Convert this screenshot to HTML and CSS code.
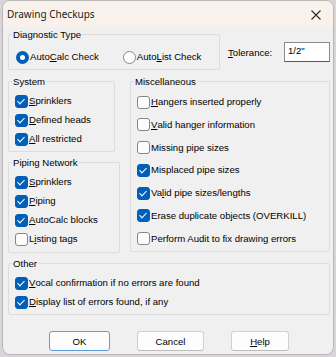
FILE: index.html
```html
<!DOCTYPE html>
<html lang="en">
<head>
    <meta charset="UTF-8">
    <title>Drawing Checkups</title>
    <link rel="stylesheet" href="styles.css">
</head>
<body>

    <div class="window">
        <div class="titlebar">
            <span class="title">Drawing Checkups</span>
            <svg class="close" width="10" height="10" viewBox="0 0 10 10">
                <path d="M0.5 0.5 L9.5 9.5 M9.5 0.5 L0.5 9.5" stroke="#2b2b2b" stroke-width="1.1" fill="none"/>
            </svg>
        </div>

        <div class="content">
            <!-- Diagnostic type + tolerance -->
            <div class="top-row">
                <div class="group diag">
                    <div class="group-title">Diagnostic Type</div>
                    <div class="radios">
                        <label class="opt"><span class="radio on"></span>Auto<u>C</u>alc Check</label>
                        <label class="opt"><span class="radio"></span>Auto<u>L</u>ist Check</label>
                    </div>
                </div>
                <div class="tolerance">
                    <span class="tol-label"><u>T</u>olerance:</span>
                    <div class="tol-input">1/2"</div>
                </div>
            </div>

            <div class="mid-row">
                <div class="left-col">
                    <div class="group system">
                        <div class="group-title">System</div>
                        <div class="items tight">
                            <label class="opt"><span class="check on"></span><u>S</u>prinklers</label>
                            <label class="opt"><span class="check on"></span><u>D</u>efined heads</label>
                            <label class="opt"><span class="check on"></span><u>A</u>ll restricted</label>
                        </div>
                    </div>
                    <div class="group piping">
                        <div class="group-title">Piping Network</div>
                        <div class="items tight">
                            <label class="opt"><span class="check on"></span><u>S</u>prinklers</label>
                            <label class="opt"><span class="check on"></span><u>P</u>iping</label>
                            <label class="opt"><span class="check on"></span><u>A</u>utoCalc blocks</label>
                            <label class="opt"><span class="check"></span>L<u>i</u>sting tags</label>
                        </div>
                    </div>
                </div>

                <div class="group misc">
                    <div class="group-title">Miscellaneous</div>
                    <div class="items wide">
                        <label class="opt"><span class="check"></span><u>H</u>angers inserted properly</label>
                        <label class="opt"><span class="check"></span><u>V</u>alid hanger information</label>
                        <label class="opt"><span class="check"></span>Missing pipe sizes</label>
                        <label class="opt"><span class="check on"></span>Misplaced pipe sizes</label>
                        <label class="opt"><span class="check on"></span>Va<u>l</u>id pipe sizes/lengths</label>
                        <label class="opt"><span class="check on"></span>Erase duplicate objects (OVERKILL)</label>
                        <label class="opt"><span class="check"></span>Perform Audit to fix drawing errors</label>
                    </div>
                </div>
            </div>

            <div class="group other">
                <div class="group-title">Other</div>
                <div class="items tight">
                    <label class="opt"><span class="check on"></span><u>V</u>ocal confirmation if no errors are found</label>
                    <label class="opt"><span class="check on"></span><u>D</u>isplay list of errors found, if any</label>
                </div>
            </div>

            <div class="buttons">
                <button class="btn ok">OK</button>
                <button class="btn cancel">Cancel</button>
                <button class="btn help"><u>H</u>elp</button>
            </div>
        </div>
    </div>

</body>
</html>
```

FILE: styles.css
```css
/* General styles */
body {
    margin: 0;
    padding: 0;
    background: #d9d4d8;
    font-family: "Liberation Sans", Arial, sans-serif;
    font-size: 9.6px;
    color: #000;
}

.window {
    margin-left: 2px;
    width: 332px;
    height: 355px;
    box-sizing: border-box;
    border: 1px solid #b8b8b8;
    border-radius: 8px;
    background: #f0f0f0;
    overflow: hidden;
}

/* Title bar */
.titlebar {
    height: 26px;
    background: #f9f2ec;
    display: flex;
    align-items: center;
    justify-content: space-between;
    padding: 0 12px 0 4px;
}

.title {
    font-family: "Noto Sans", sans-serif;
    font-size: 10px;
    color: #1a1a1a;
}

.close {
    margin-top: 1px;
}

.content {
    padding: 0 3px 0 5px;
}

/* Group boxes */
.group {
    border: 1px solid #dcdcdc;
    border-radius: 2px;
    box-sizing: border-box;
}

.group-title {
    display: table;
    margin: -7px 0 0 3px;
    padding: 0 1px;
    height: 13px;
    line-height: 13px;
    background: #f0f0f0;
}

.opt {
    display: flex;
    align-items: center;
    height: 14px;
    line-height: 14px;
    white-space: nowrap;
}

.items {
    display: flex;
    flex-direction: column;
    padding-left: 6px;
}

.items.tight {
    margin-top: 6px;
    gap: 5px;
}

.items.wide {
    margin-top: 7px;
    gap: 8.8px;
}

/* Checkboxes and radios */
.check {
    width: 13px;
    height: 13px;
    box-sizing: border-box;
    border: 1px solid #868686;
    border-radius: 3px;
    background: #fdfdfd;
    margin-right: 1px;
    flex: none;
    position: relative;
}

.check.on {
    background: #005fb8;
    border-color: #005fb8;
}

.check.on::after {
    content: "";
    position: absolute;
    left: 3px;
    top: 1px;
    width: 3px;
    height: 6px;
    border: solid #fff;
    border-width: 0 1.4px 1.4px 0;
    transform: rotate(45deg);
}

.radio {
    width: 13px;
    height: 13px;
    box-sizing: border-box;
    border: 1px solid #868686;
    border-radius: 50%;
    background: #fdfdfd;
    margin-right: 1px;
    flex: none;
}

.radio.on {
    border: 4px solid #005fb8;
    background: #fff;
}

/* Top row */
.top-row {
    display: flex;
    margin-top: 7px;
}

.diag {
    width: 212px;
    height: 36px;
}

.radios {
    display: flex;
    gap: 24px;
    margin-top: 9px;
    padding-left: 7px;
}

.tolerance {
    display: flex;
    align-items: flex-start;
    margin-left: 8px;
    margin-top: 8px;
}

.tol-label {
    margin-top: 5px;
    width: 56px;
}

.tol-input {
    width: 46px;
    height: 20px;
    box-sizing: border-box;
    background: #fff;
    border: 1px solid #8a8a8a;
    border-bottom-color: #5a5a5a;
    padding: 1px 3px;
    line-height: 13px;
}

/* Middle row */
.mid-row {
    display: flex;
    margin-top: 11px;
}

.left-col {
    display: flex;
    flex-direction: column;
    gap: 10px;
}

.system {
    width: 107px;
    height: 71px;
}

.piping {
    width: 112px;
    height: 91px;
}

.misc {
    margin-left: 10px;
    width: 200px;
    height: 171px;
}

.other {
    margin-top: 10px;
    width: 322px;
    height: 52px;
}

/* Buttons */
.buttons {
    display: flex;
    margin-top: 16px;
    padding-left: 41px;
}

.btn {
    height: 20px;
    font-family: "Liberation Sans", Arial, sans-serif;
    font-size: 9.6px;
    color: #000;
    background: #fdfdfd;
    border: 1px solid #d0d0d0;
    border-bottom-color: #bdbdbd;
    border-radius: 3px;
    padding: 0;
}

.ok {
    width: 61px;
    border-color: #5b9ee0;
}

.cancel {
    width: 67px;
    margin-left: 27px;
}

.help {
    width: 58px;
    margin-left: 27px;
}
```
